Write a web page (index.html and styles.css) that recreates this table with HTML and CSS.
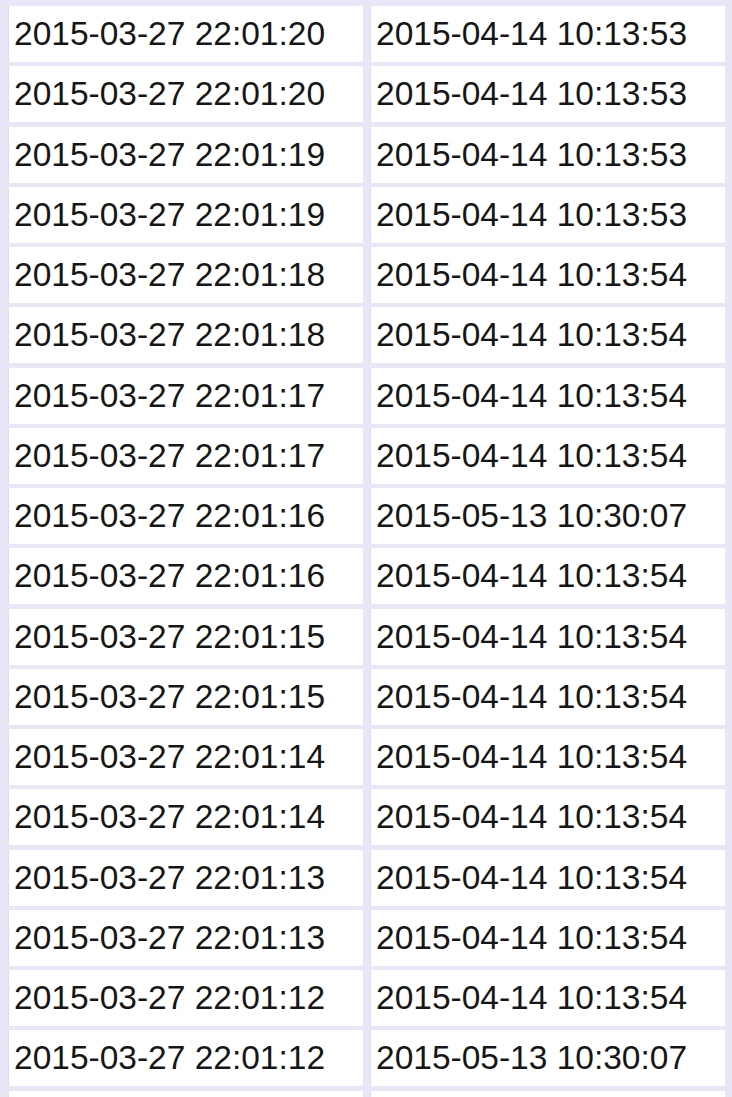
FILE: index.html
```html
<!DOCTYPE html>
<html>
<head>
  <title>Times</title>
  <link rel="stylesheet" href="styles.css">
</head>
<body>
<div class="grid">
  <div class="cell">2015-03-27 22:01:20</div><div class="cell">2015-04-14 10:13:53</div>
  <div class="cell">2015-03-27 22:01:20</div><div class="cell">2015-04-14 10:13:53</div>
  <div class="cell">2015-03-27 22:01:19</div><div class="cell">2015-04-14 10:13:53</div>
  <div class="cell">2015-03-27 22:01:19</div><div class="cell">2015-04-14 10:13:53</div>
  <div class="cell">2015-03-27 22:01:18</div><div class="cell">2015-04-14 10:13:54</div>
  <div class="cell">2015-03-27 22:01:18</div><div class="cell">2015-04-14 10:13:54</div>
  <div class="cell">2015-03-27 22:01:17</div><div class="cell">2015-04-14 10:13:54</div>
  <div class="cell">2015-03-27 22:01:17</div><div class="cell">2015-04-14 10:13:54</div>
  <div class="cell">2015-03-27 22:01:16</div><div class="cell">2015-05-13 10:30:07</div>
  <div class="cell">2015-03-27 22:01:16</div><div class="cell">2015-04-14 10:13:54</div>
  <div class="cell">2015-03-27 22:01:15</div><div class="cell">2015-04-14 10:13:54</div>
  <div class="cell">2015-03-27 22:01:15</div><div class="cell">2015-04-14 10:13:54</div>
  <div class="cell">2015-03-27 22:01:14</div><div class="cell">2015-04-14 10:13:54</div>
  <div class="cell">2015-03-27 22:01:14</div><div class="cell">2015-04-14 10:13:54</div>
  <div class="cell">2015-03-27 22:01:13</div><div class="cell">2015-04-14 10:13:54</div>
  <div class="cell">2015-03-27 22:01:13</div><div class="cell">2015-04-14 10:13:54</div>
  <div class="cell">2015-03-27 22:01:12</div><div class="cell">2015-04-14 10:13:54</div>
  <div class="cell">2015-03-27 22:01:12</div><div class="cell">2015-05-13 10:30:07</div>
  <div class="cell"></div><div class="cell"></div>
</div>
</body>
</html>
```

FILE: styles.css
```css
* {
  box-sizing: border-box;
}
body {
  margin: 0;
  padding: 0;
  background-color: #e7e7f8;
  font-family: "Liberation Sans", Arial, sans-serif;
  overflow: hidden;
}
.grid {
  display: grid;
  grid-template-columns: 355px 355px;
  grid-auto-rows: 56px;
  column-gap: 7px;
  row-gap: 4.25px;
  padding: 6px 7px 0 8px;
}
.cell {
  background-color: #fff;
  color: #161616;
  font-size: 33.5px;
  line-height: 56px;
  padding-left: 5px;
  white-space: nowrap;
  border-left: 1px solid #dcdcf3;
}
```
